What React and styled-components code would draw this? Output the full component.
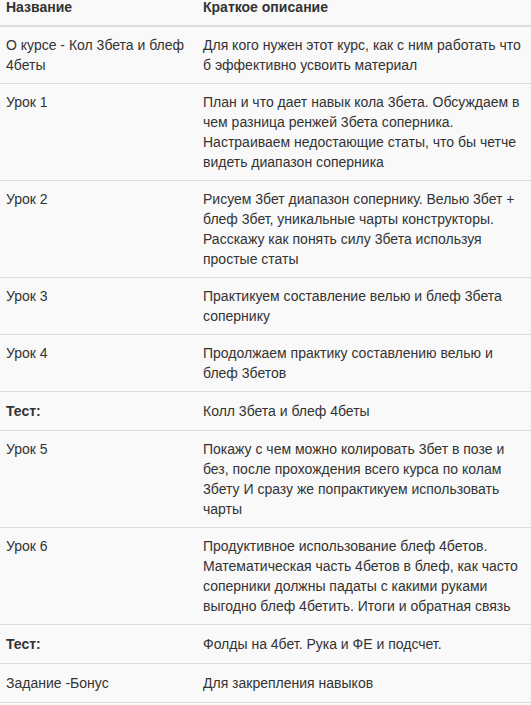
import React from 'react'
import styled, { createGlobalStyle } from 'styled-components'

const GlobalStyle = createGlobalStyle`
    html, body {
        margin: 0;
        padding: 0;
        background: #f9f9f9;
    }
    body {
        font-family: "Liberation Sans", Arial, sans-serif;
        font-size: 14px;
        line-height: 20px;
        color: #333;
    }
`

const Page = styled.div`
    width: 531px;
    overflow: hidden;
`

const Table = styled.table`
    width: 535px;
    table-layout: fixed;
    border-collapse: collapse;
    border-spacing: 0;
    margin-top: -11px;
`

const HeadCell = styled.th`
    text-align: left;
    font-weight: bold;
    padding: 8px 6px;
    border-bottom: 2px solid #ddd;
    vertical-align: bottom;
    width: ${props => props.$width || 'auto'};
`

// short rows in the original are a bit taller than the text rows
const Cell = styled.td`
    padding: ${props => (props.$short ? '9px 6px' : '8px 6px')};
    border-bottom: 1px solid #ddd;
    vertical-align: top;
    font-weight: ${props => (props.$bold ? 'bold' : 'normal')};
`

const lessons = [
    { name: 'О курсе - Кол 3бета и блеф 4беты', text: 'Для кого нужен этот курс, как с ним работать что б эффективно усвоить материал' },
    { name: 'Урок 1', text: 'План и что дает навык кола 3бета. Обсуждаем в чем разница ренжей 3бета соперника. Настраиваем недостающие статы, что бы четче видеть диапазон соперника' },
    { name: 'Урок 2', text: 'Рисуем 3бет диапазон сопернику. Велью 3бет + блеф 3бет, уникальные чарты конструкторы. Расскажу как понять силу 3бета используя простые статы' },
    { name: 'Урок 3', text: 'Практикуем составление велью и блеф 3бета сопернику' },
    { name: 'Урок 4', text: 'Продолжаем практику составлению велью и блеф 3бетов' },
    { name: 'Тест:', text: 'Колл 3бета и блеф 4беты', bold: true, short: true },
    { name: 'Урок 5', text: 'Покажу с чем можно колировать 3бет в позе и без, после прохождения всего курса по колам 3бету И сразу же попрактикуем использовать чарты' },
    { name: 'Урок 6', text: 'Продуктивное использование блеф 4бетов. Математическая часть 4бетов в блеф, как часто соперники должны падаты с какими руками выгодно блеф 4бетить. Итоги и обратная связь' },
    { name: 'Тест:', text: 'Фолды на 4бет. Рука и ФЕ и подсчет.', bold: true, short: true },
    { name: 'Задание -Бонус', text: 'Для закрепления навыков', short: true },
]

const App = () => {
    return (
        <Page>
            <GlobalStyle />
            <Table>
                <thead>
                    <tr>
                        <HeadCell $width='185px'>Название</HeadCell>
                        <HeadCell>Краткое описание</HeadCell>
                    </tr>
                </thead>
                <tbody>
                    {lessons.map((item, i) => (
                        <tr key={i}>
                            <Cell $bold={item.bold} $short={item.short}>{item.name}</Cell>
                            <Cell $short={item.short}>{item.text}</Cell>
                        </tr>
                    ))}
                </tbody>
            </Table>
        </Page>
    )
}

export default App
